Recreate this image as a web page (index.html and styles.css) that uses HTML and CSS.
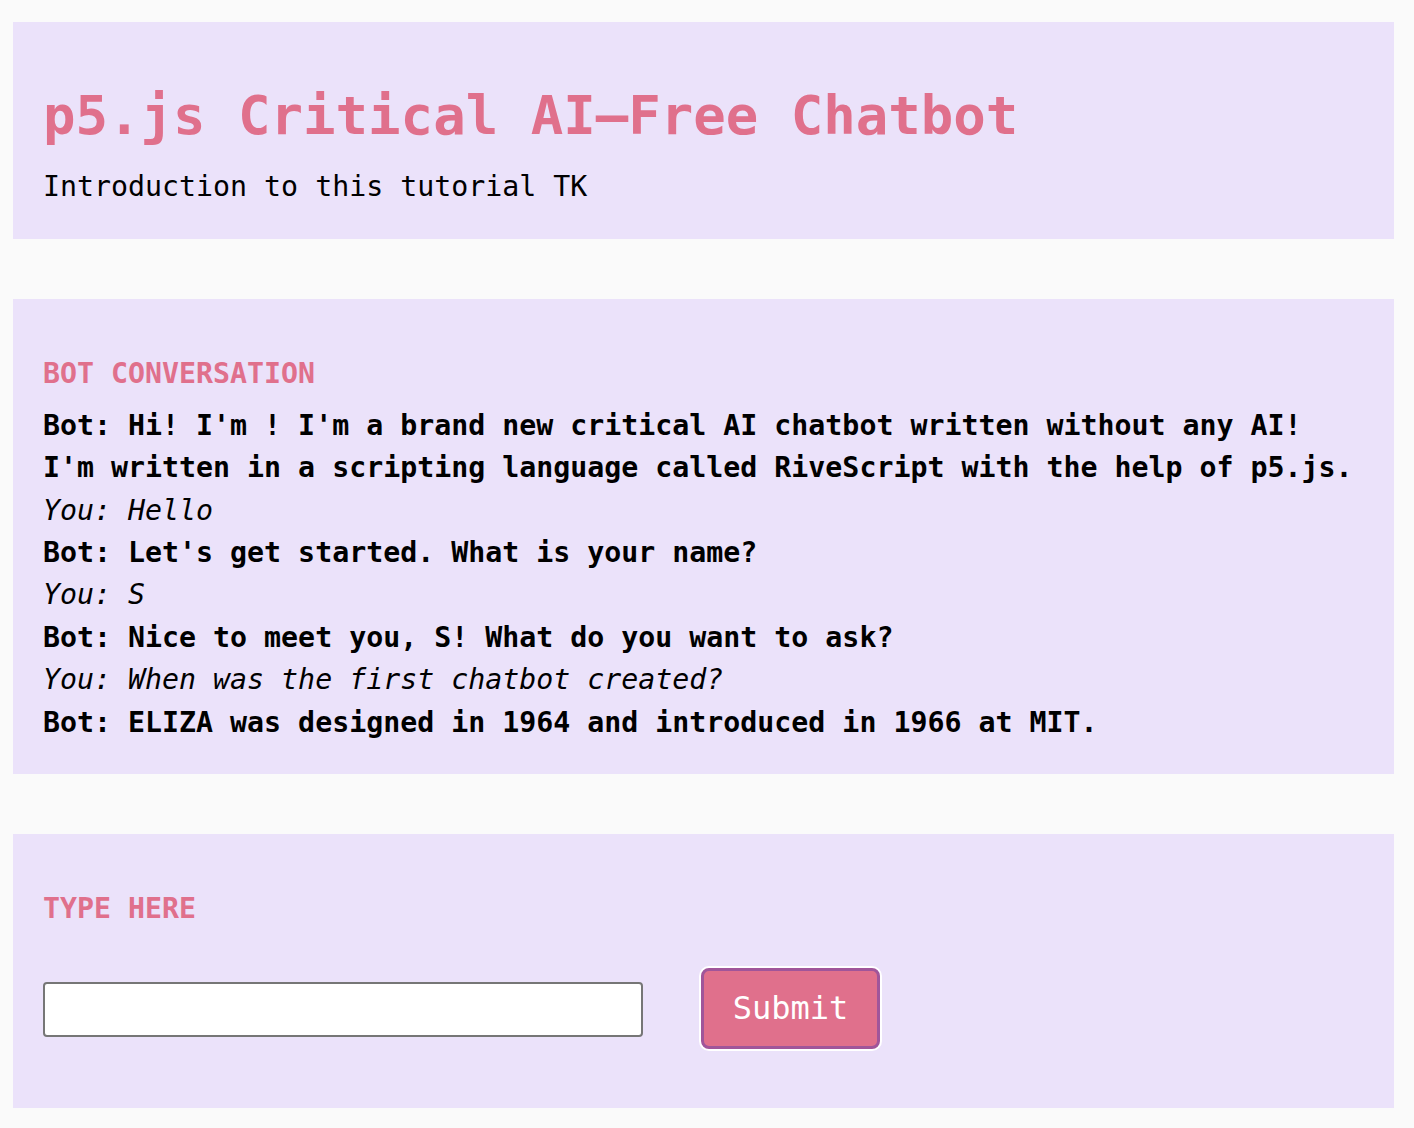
FILE: index.html
```html
<!DOCTYPE html>
<html lang="en">
<head>
<meta charset="utf-8">
<title>p5.js Critical AI–Free Chatbot</title>
<link rel="stylesheet" href="styles.css">
</head>
<body>
  <section class="panel intro-panel">
    <h1 class="title">p5.js Critical AI–Free Chatbot</h1>
    <p class="intro">Introduction to this tutorial TK</p>
  </section>

  <section class="panel chat-panel">
    <h2 class="label">BOT CONVERSATION</h2>
    <div class="chat">
      <div class="bot">Bot: Hi! I'm ! I'm a brand new critical AI chatbot written without any AI!</div>
      <div class="bot">I'm written in a scripting language called RiveScript with the help of p5.js.</div>
      <div class="you">You: Hello</div>
      <div class="bot">Bot: Let's get started. What is your name?</div>
      <div class="you">You: S</div>
      <div class="bot">Bot: Nice to meet you, S! What do you want to ask?</div>
      <div class="you">You: When was the first chatbot created?</div>
      <div class="bot">Bot: ELIZA was designed in 1964 and introduced in 1966 at MIT.</div>
    </div>
  </section>

  <section class="panel input-panel">
    <h2 class="label label-type">TYPE HERE</h2>
    <div class="form-row">
      <input class="text-input" type="text" aria-label="Type here">
      <button class="submit" type="button">Submit</button>
    </div>
  </section>
</body>
</html>
```

FILE: styles.css
```css
html {
  background: #fafafa;
}

body {
  margin: 0;
  padding: 22px 20px 20px 13px;
  background: #fafafa;
  font-family: "DejaVu Sans Mono", "Liberation Mono", monospace;
  font-size: 28.25px;
  line-height: 1.5;
  color: #000;
}

.panel {
  background: #ebe2fa;
  padding: 30px;
  margin-bottom: 60px;
}

.panel:last-child {
  margin-bottom: 0;
}

.title {
  margin: 32px 0 18px;
  font-size: 54px;
  line-height: 64px;
  font-weight: bold;
  color: #e0708c;
}

.intro {
  margin: 0 0 0.6px;
}

.label {
  margin: 24px 0 9.6px;
  font-size: 28.25px;
  line-height: 1.5;
  font-weight: bold;
  color: #e0708c;
}

.chat {
  margin-bottom: 0;
}

.bot {
  font-weight: bold;
}

.you {
  font-style: italic;
}

.label-type {
  margin-bottom: 37.6px;
}

.form-row {
  display: flex;
  align-items: center;
  margin-bottom: 29px;
}

.text-input {
  box-sizing: border-box;
  width: 600px;
  height: 55px;
  margin: 2px 0 0;
  padding: 0 8px;
  border: 2px solid #767676;
  border-radius: 4px;
  background: #fff;
  font-family: inherit;
  font-size: 28px;
}

.submit {
  box-sizing: border-box;
  width: 179px;
  height: 81px;
  margin-left: 58px;
  padding: 0;
  border: 3px solid #a0559a;
  border-radius: 8px;
  background: #e0708c;
  box-shadow: 0 0 0 2px #fff;
  color: #fff;
  font-family: "DejaVu Sans Mono", "Liberation Mono", monospace;
  font-size: 32px;
  line-height: 1;
}
```
